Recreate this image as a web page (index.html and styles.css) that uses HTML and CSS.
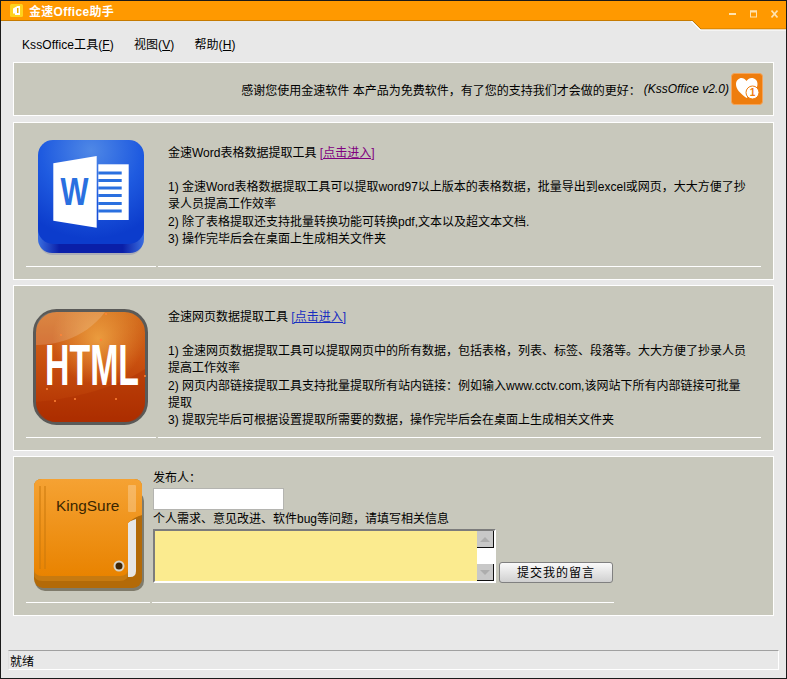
FILE: index.html
```html
<!DOCTYPE html>
<html lang="zh-CN">
<head>
  <meta charset="UTF-8">
  <title>金速Office助手</title>
  <link rel="stylesheet" href="styles.css">
</head>
<body>
  <div class="window">
    <div class="titlebar">
      <svg class="app-icon" viewBox="0 0 13 13">
        <rect x="0" y="0" width="13" height="13" rx="1.5" fill="#ffd21e"/>
        <path d="M3 4.5 L7.5 2 H10 V11 H5 V9.5 H3 Z" fill="#fff"/>
        <rect x="7" y="4" width="1.5" height="5" fill="#e8a800"/>
      </svg>
      <span class="title-text">金速Office助手</span>
      <div class="win-controls">
        <svg class="win-btn" viewBox="0 0 7 8"><rect x="0" y="3" width="7" height="2" fill="#ffe3b0"/></svg>
        <svg class="win-btn" viewBox="0 0 7 8"><rect x="0.5" y="1" width="6" height="6" fill="none" stroke="#ffe3b0"/><rect x="0" y="0.5" width="7" height="2" fill="#ffe3b0"/></svg>
        <svg class="win-btn" viewBox="0 0 7 8"><path d="M0.5 0.5 L6.5 7.5 M6.5 0.5 L0.5 7.5" stroke="#ffe3b0" stroke-width="1.6" fill="none"/></svg>
      </div>
      <!-- tab shape that hangs under the right end of the title bar -->
      <svg class="title-notch" viewBox="0 0 94 11">
        <polygon points="0,0 9,9 94,9 94,0" fill="#ff9900"/>
        <polyline points="0,0 9,9 94,9" fill="none" stroke="#c67a00"/>
        <polyline points="-1,1 8,10 94,10" fill="none" stroke="#fff"/>
      </svg>
    </div>

    <div class="menubar">
      <span class="menu-item">KssOffice工具(<u>F</u>)</span>
      <span class="menu-item">视图(<u>V</u>)</span>
      <span class="menu-item">帮助(<u>H</u>)</span>
    </div>

    <div class="panel thanks">
      <span>感谢您使用金速软件 本产品为免费软件，有了您的支持我们才会做的更好：</span>
      <em class="version">(KssOffice v2.0)</em>
      <svg class="heart-btn" viewBox="0 0 32 32">
        <rect x="0.5" y="0.5" width="31" height="31" rx="3" fill="#ee7d0e" stroke="#f5a45a"/>
        <path d="M15.5 25 C9 20 5 16.5 5 11 C5 7.5 8 5 10.5 5 C12.5 5 14 6 15.5 8 C17 6 18.5 5 20.5 5 C24 5 26.5 7.5 26.5 11 C26.5 16.5 21 21 15.5 25 Z" fill="#fff"/>
        <circle cx="21.5" cy="19.5" r="6.5" fill="#fff" stroke="#ee7d0e"/>
        <text class="heart-num" x="21.5" y="23" text-anchor="middle">1</text>
      </svg>
    </div>

    <div class="panel card card-word">
      <div class="card-row">
        <div class="card-icon">
          <svg class="icon-word" viewBox="0 0 106 116">
            <defs>
              <radialGradient id="wordFace" cx="50%" cy="10%" r="85%">
                <stop offset="0" stop-color="#4f88e6"/>
                <stop offset="0.55" stop-color="#1f5be0"/>
                <stop offset="1" stop-color="#0c3ccc"/>
              </radialGradient>
              <linearGradient id="wordLip" x1="0" y1="0" x2="1" y2="0">
                <stop offset="0" stop-color="#3a6ee0"/>
                <stop offset="0.2" stop-color="#0a1fa8"/>
                <stop offset="0.8" stop-color="#0a1fa8"/>
                <stop offset="1" stop-color="#3a6ee0"/>
              </linearGradient>
            </defs>
            <rect x="1" y="14" width="104" height="101" rx="14" fill="#8d92b0" opacity="0.5"/>
            <rect x="0" y="12" width="106" height="101" rx="14" fill="url(#wordLip)"/>
            <rect x="0" y="0" width="106" height="104" rx="15" fill="url(#wordFace)"/>
            <polygon points="15.3,23.3 58.7,16 58.7,87.7 15.3,80.7" fill="#fff"/>
            <rect x="60.3" y="24.3" width="30.4" height="55.7" fill="#fff"/>
            <rect x="60.3" y="31.5" width="23.4" height="3" fill="#2a70e0"/>
            <rect x="60.3" y="39" width="23.4" height="3" fill="#2a70e0"/>
            <rect x="60.3" y="46.5" width="23.4" height="3" fill="#2a70e0"/>
            <rect x="60.3" y="54" width="23.4" height="3" fill="#2a70e0"/>
            <rect x="60.3" y="62" width="23.4" height="3" fill="#2a70e0"/>
            <rect x="60.3" y="69.5" width="23.4" height="3" fill="#2a70e0"/>
            <text class="word-w" transform="translate(22.5 65) scale(0.78 1)">W</text>
          </svg>
        </div>
        <div class="card-text">
          <p>金速Word表格数据提取工具 <a class="link-visited" href="#">[点击进入]</a></p>
          <p class="spaced">1) 金速Word表格数据提取工具可以提取word97以上版本的表格数据，批量导出到excel或网页，大大方便了抄<br>录人员提高工作效率<br>2) 除了表格提取还支持批量转换功能可转换pdf,文本以及超文本文档.<br>3) 操作完毕后会在桌面上生成相关文件夹</p>
        </div>
      </div>
      <div class="divider"><i class="seg-left"></i><i class="seg-right"></i></div>
    </div>

    <div class="panel card card-html">
      <div class="card-row">
        <div class="card-icon">
          <svg class="icon-html" viewBox="0 0 115 116">
            <defs>
              <linearGradient id="htmlFace" x1="0" y1="0" x2="0" y2="1">
                <stop offset="0" stop-color="#d4701f"/>
                <stop offset="0.45" stop-color="#c9500f"/>
                <stop offset="1" stop-color="#ad2e00"/>
              </linearGradient>
              <radialGradient id="htmlGlow" cx="57%" cy="24%" r="42%">
                <stop offset="0" stop-color="#f2ab48" stop-opacity="0.8"/>
                <stop offset="1" stop-color="#f2ab48" stop-opacity="0"/>
              </radialGradient>
            </defs>
            <rect x="1.5" y="1.5" width="112" height="113" rx="22" fill="url(#htmlFace)" stroke="#5a5a58" stroke-width="3"/>
            <rect x="3" y="3" width="109" height="110" rx="20" fill="url(#htmlGlow)"/>
            <path d="M3 36 C18 36 50 32 72 3 H24 Q3 3 3 24 Z" fill="#fff" opacity="0.16"/>
            <path d="M3 93 C40 90 85 78 112 60 V92 Q112 113 92 113 H24 Q3 113 3 93 Z" fill="#a82a00" opacity="0.35"/>
            <g fill="#ff8438">
              <circle cx="14" cy="80" r="1"/>
              <circle cx="42" cy="90" r="1"/>
              <circle cx="83" cy="90" r="1"/>
              <circle cx="28" cy="26" r="1"/>
              <circle cx="73" cy="5" r="1"/>
              <circle cx="68" cy="31" r="1.2"/>
              <circle cx="112" cy="67" r="1"/>
              <circle cx="22" cy="92" r="1"/>
            </g>
            <text class="html-word" transform="translate(12 76) scale(0.584 1)">HTML</text>
          </svg>
        </div>
        <div class="card-text">
          <p>金速网页数据提取工具 <a class="link-plain" href="#">[点击进入]</a></p>
          <p class="spaced">1) 金速网页数据提取工具可以提取网页中的所有数据，包括表格，列表、标签、段落等。大大方便了抄录人员<br>提高工作效率<br>2) 网页内部链接提取工具支持批量提取所有站内链接：例如输入www.cctv.com,该网站下所有内部链接可批量<br>提取<br>3) 提取完毕后可根据设置提取所需要的数据，操作完毕后会在桌面上生成相关文件夹</p>
        </div>
      </div>
      <div class="divider"><i class="seg-left"></i><i class="seg-right"></i></div>
    </div>

    <div class="panel card card-msg">
      <div class="card-row">
        <div class="card-icon">
          <svg class="icon-book" viewBox="0 0 112 114">
            <defs>
              <linearGradient id="bookCover" x1="0" y1="0" x2="0" y2="1">
                <stop offset="0" stop-color="#f5a233"/>
                <stop offset="1" stop-color="#e98300"/>
              </linearGradient>
            </defs>
            <rect x="1" y="12" width="109" height="100" rx="10" fill="#5f5a48" opacity="0.7"/>
            <rect x="0" y="10" width="108" height="99" rx="9" fill="#b36a08"/>
            <path d="M94 43 L102 40 V92 Q102 98 96 98 H94 Z" fill="#e6e6e6"/>
            <path d="M8 0 H100 Q108 0 108 8 V36 Q100 38 94 44 V95 Q94 102 86 102 H8 Q0 102 0 94 V8 Q0 0 8 0 Z" fill="#c77a10"/>
            <path d="M8 0 H100 Q108 0 108 8 V36 Q100 38 94 44 V90 Q94 97 86 97 H8 Q0 97 0 89 V8 Q0 0 8 0 Z" fill="url(#bookCover)"/>
            <path d="M6 7 V90 M11 7 V90" stroke="#c9780c" stroke-width="1"/>
            <rect x="94" y="6" width="8" height="27" rx="1" fill="#fff" opacity="0.25"/>
            <text class="book-name" x="22" y="32">KingSure</text>
            <circle cx="85" cy="87" r="5.5" fill="#d8d4c8"/>
            <circle cx="85" cy="87" r="3.5" fill="#3f2505"/>
          </svg>
        </div>
        <form class="msg-form">
          <label class="msg-label">发布人：</label>
          <input class="msg-name" type="text">
          <label class="msg-label">个人需求、意见改进、软件bug等问题，请填写相关信息</label>
          <div class="msg-bottom">
            <div class="msg-box">
              <textarea class="msg-area"></textarea>
              <div class="scroll">
                <div class="scroll-btn"><i class="arrow-up"></i></div>
                <div class="scroll-track"></div>
                <div class="scroll-btn"><i class="arrow-down"></i></div>
              </div>
            </div>
            <button class="msg-submit" type="button">提交我的留言</button>
          </div>
        </form>
      </div>
      <div class="divider divider-short"><i class="seg-left"></i><i class="seg-right"></i></div>
    </div>

    <div class="statusbar">就绪</div>
  </div>
</body>
</html>
```

FILE: styles.css
```css
* {
  box-sizing: border-box;
}
html, body {
  margin: 0;
  padding: 0;
}
body {
  font-family: "Liberation Sans", "Noto Sans CJK SC", sans-serif;
  font-size: 12px;
  color: #000;
  overflow: hidden;
}
.window {
  position: relative;
  width: 787px;
  height: 679px;
  background-color: #e8e8e8;
  border: 1px solid #1a1a1a;
  display: flex;
  flex-direction: column;
}
.titlebar {
  position: relative;
  height: 20px;
  flex: none;
  background-color: #ff9900;
  border-bottom: 1px solid #c67a00;
  display: flex;
  align-items: center;
  padding-left: 9px;
}
.app-icon {
  width: 13px;
  height: 13px;
}
.title-text {
  margin-left: 6px;
  color: #fff;
  font-weight: bold;
  letter-spacing: 0.3px;
}
.win-controls {
  margin-left: auto;
  margin-right: 8px;
  display: flex;
  gap: 14px;
  position: relative;
  top: 3px;
  z-index: 2;
}
.win-btn {
  width: 7px;
  height: 8px;
  display: block;
}
.title-notch {
  position: absolute;
  right: 0;
  top: 19px;
  width: 94px;
  height: 11px;
  overflow: visible;
}
.menubar {
  height: 41px;
  flex: none;
  display: flex;
  align-items: center;
  gap: 20px;
  padding: 4px 0 0 21px;
}
.menu-item {
  white-space: nowrap;
  letter-spacing: 0.1px;
}
.panel {
  margin: 0 12px;
  background-color: #c8c8bc;
  border: 1px solid #fff;
  flex: none;
}
.thanks {
  height: 54px;
  display: flex;
  align-items: center;
  justify-content: flex-end;
  padding-right: 10px;
}
.version {
  margin-left: 3px;
  margin-right: 2px;
}
.heart-btn {
  width: 32px;
  height: 32px;
  display: block;
}
.heart-num {
  font: bold 10px "Liberation Sans", sans-serif;
  fill: #ee7d0e;
}
.card {
  padding-left: 12px;
  padding-right: 12px;
}
.card-word {
  height: 158px;
  margin-top: 6px;
}
.card-html {
  height: 166px;
  margin-top: 5px;
}
.card-msg {
  height: 160px;
  margin-top: 5px;
}
.card-row {
  display: flex;
}
.card-word .card-row {
  height: 143px;
}
.card-html .card-row {
  height: 151px;
}
.card-msg .card-row {
  height: 145px;
}
.card-icon {
  width: 130px;
  flex: none;
}
.card-icon svg {
  display: block;
}
.icon-word {
  width: 106px;
  height: 116px;
  margin: 17px 0 0 12px;
}
.icon-html {
  width: 115px;
  height: 116px;
  margin: 23px 0 0 7px;
}
.icon-book {
  width: 112px;
  height: 114px;
  margin: 22px 0 0 8px;
}
.word-w {
  font: bold 38px "Liberation Sans", sans-serif;
  fill: #2a70e0;
}
.html-word {
  font: bold 58px "Liberation Sans", sans-serif;
  fill: #fff;
}
.book-name {
  font: 15.4px "Liberation Sans", sans-serif;
  fill: #3a2600;
}
.card-text {
  margin-left: 12px;
  padding-top: 22px;
  line-height: 17.2px;
  white-space: nowrap;
}
.card-html .card-text {
  padding-top: 23px;
}
.card-text p {
  margin: 0;
}
.card-text .spaced {
  margin-top: 17px;
}
.link-visited {
  color: #800080;
}
.link-plain {
  color: #1a2fc0;
}
.divider {
  display: flex;
  gap: 2px;
  height: 1px;
}
.divider i {
  display: block;
  height: 1px;
  background-color: #fff;
}
.seg-left {
  width: 130px;
}
.seg-right {
  width: 603px;
}
.divider-short .seg-left {
  width: 124px;
}
.divider-short .seg-right {
  width: 462px;
}
.msg-form {
  margin-left: -3px;
  padding-top: 12px;
  display: flex;
  flex-direction: column;
  align-items: flex-start;
}
.msg-label {
  display: block;
  line-height: 19px;
  white-space: nowrap;
}
.msg-name {
  width: 131px;
  height: 22px;
  margin: 0;
  padding: 0;
  background-color: #fff;
  border: 1px solid #b4b4b0;
  border-radius: 0;
}
.msg-bottom {
  display: flex;
  align-items: flex-end;
  gap: 3px;
}
.msg-box {
  width: 343px;
  height: 54px;
  display: flex;
  border-top: 2px solid #7c7c7c;
  border-left: 2px solid #7c7c7c;
  border-right: 2px solid #fff;
  border-bottom: 2px solid #fff;
}
.msg-area {
  width: 322px;
  height: 100%;
  flex: none;
  margin: 0;
  padding: 0;
  border: none;
  outline: none;
  resize: none;
  background-color: #fbeb8f;
}
.scroll {
  flex: 1;
  display: flex;
  flex-direction: column;
  background-color: #fff;
}
.scroll-btn {
  height: 17px;
  flex: none;
  background-color: #c8c8c8;
  border-right: 1px solid #111;
  border-bottom: 1px solid #111;
  display: flex;
  align-items: center;
  justify-content: center;
}
.scroll-track {
  flex: 1;
}
.arrow-up {
  width: 0;
  height: 0;
  border-left: 5px solid transparent;
  border-right: 5px solid transparent;
  border-bottom: 5px solid #adadad;
}
.arrow-down {
  width: 0;
  height: 0;
  border-left: 5px solid transparent;
  border-right: 5px solid transparent;
  border-top: 5px solid #adadad;
}
.msg-submit {
  width: 114px;
  height: 21px;
  padding: 0 0 3px;
  font-family: "Noto Sans CJK SC", sans-serif;
  font-size: 12px;
  letter-spacing: 1px;
  color: #000;
  background: linear-gradient(#fafafa, #d0d0d0);
  border: 1px solid #808080;
  border-radius: 3px;
}
.statusbar {
  margin: 34px 7px 0 7px;
  height: 20px;
  flex: none;
  padding-left: 1px;
  line-height: 22px;
  border-top: 1px solid #a0a0a0;
  border-left: 1px solid #e0e0e0;
  border-right: 1px solid #fff;
  border-bottom: 1px solid #fff;
}
```
